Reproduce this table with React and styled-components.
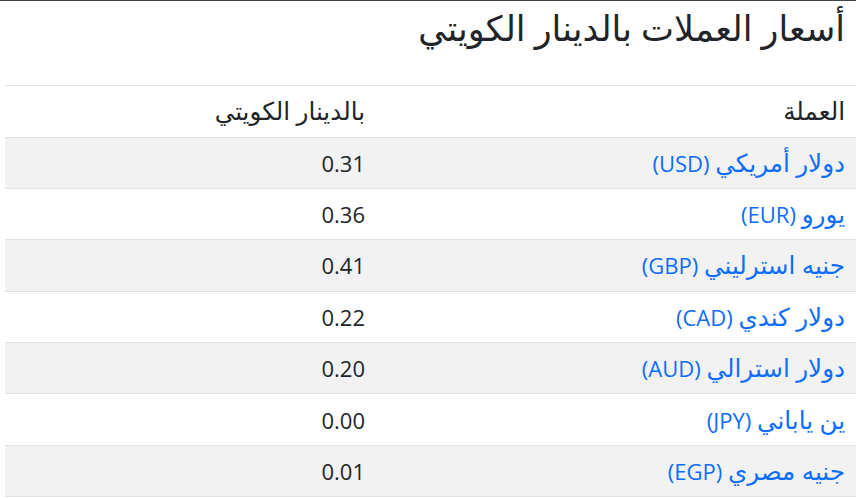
import React from "react";
import styled, { createGlobalStyle } from "styled-components";

const Global = createGlobalStyle`
  html, body { margin: 0; padding: 0; background: #fff; }
  body {
    font-family: "Open Sans", "DejaVu Sans", sans-serif;
    color: #212529;
  }
`;

const Page = styled.div`
  direction: rtl;
  border-top: 1px solid #444;
  padding: 0 0 0 5px;
  overflow: hidden;
`;

const Title = styled.h2`
  margin: 0;
  padding: 6px 11px 0 0;
  height: 85px;
  box-sizing: border-box;
  font-size: 35px;
  font-weight: 500;
  line-height: 1.2;
  color: #212529;
  border-bottom: 1px solid #dee2e6;
`;

const Table = styled.table`
  width: 100%;
  table-layout: fixed;
  border-collapse: collapse;
  font-size: 22px;
`;

const Col = styled.col`
  width: ${(p) => p.$w};
`;

const HeadCell = styled.th`
  text-align: right;
  font-weight: 400;
  height: 51px;
  box-sizing: border-box;
  padding: 0 11px 0 12px;
  line-height: 26px;
  border-bottom: 1px solid #dee2e6;
`;

const Row = styled.tr`
  background: ${(p) => (p.$striped ? "#f2f2f2" : "#fff")};
`;

const Cell = styled.td`
  text-align: right;
  height: 51.4px;
  box-sizing: border-box;
  padding: 0 11px 0 12px;
  line-height: 26px;
  border-bottom: 1px solid #dee2e6;
`;

const Ar = styled.span`
  font-size: 1.12em;
  line-height: 26px;
`;

const Link = styled.a`
  color: #0d6efd;
  text-decoration: none;
`;

const rows = [
  ["دولار أمريكي", "USD", "0.31"],
  ["يورو", "EUR", "0.36"],
  ["جنيه استرليني", "GBP", "0.41"],
  ["دولار كندي", "CAD", "0.22"],
  ["دولار استرالي", "AUD", "0.20"],
  ["ين ياباني", "JPY", "0.00"],
  ["جنيه مصري", "EGP", "0.01"],
];

export default function App() {
  return (
    <>
      <Global />
      <Page>
        <Title>أسعار العملات بالدينار الكويتي</Title>
        <Table>
          <colgroup>
            <Col $w="480px" />
            <Col $w="auto" />
          </colgroup>
          <thead>
            <tr>
              <HeadCell>
                <Ar>العملة</Ar>
              </HeadCell>
              <HeadCell>
                <Ar>بالدينار الكويتي</Ar>
              </HeadCell>
            </tr>
          </thead>
          <tbody>
            {rows.map(([name, code, val], i) => (
              <Row key={code} $striped={i % 2 === 0}>
                <Cell>
                  <Link href="#">
                    <Ar>{name}</Ar> ({code})
                  </Link>
                </Cell>
                <Cell>{val}</Cell>
              </Row>
            ))}
          </tbody>
        </Table>
      </Page>
    </>
  );
}
